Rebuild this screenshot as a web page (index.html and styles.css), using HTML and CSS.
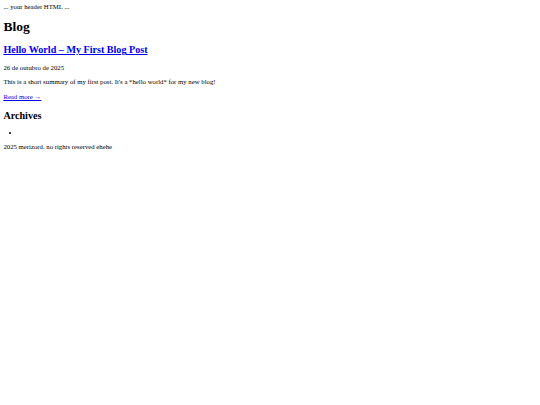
FILE: index.html
```html
<!DOCTYPE html>
<html lang="pt">
<head>
<meta charset="utf-8">
<title>Blog</title>
<link rel="stylesheet" href="styles.css">
</head>
<body>
<div class="site-header">... your header HTML ...</div>
<main class="content">
  <h1 class="page-title">Blog</h1>
  <article class="post">
    <h2 class="post-title"><a href="#">Hello World – My First Blog Post</a></h2>
    <p class="post-date">26 de outubro de 2025</p>
    <p class="post-summary">This is a short summary of my first post. It's a *hello world* for my new blog!</p>
    <p class="post-more"><a class="read-more" href="#">Read more →</a></p>
  </article>
  <section class="archives">
    <h2 class="archives-title">Archives</h2>
    <ul class="archives-list"><li></li></ul>
  </section>
</main>
<footer class="site-footer">2025 merizord. no rights reserved ehehe</footer>
</body>
</html>
```

FILE: styles.css
```css
html {
  background: #fff;
}
body {
  margin: 3.375px;
  font-family: "Liberation Serif", "Times New Roman", serif;
  font-size: 6.75px;
  color: #000;
}
a {
  color: #0000ee;
}
.page-title {
  font-size: 2em;
  margin: 0.67em 0;
}
.post-title {
  font-size: 1.5em;
  margin: 0.83em 0;
}
.post p {
  margin: 1em 0;
}
.post .post-more {
  margin-top: 8.75px;
}
.archives-title {
  font-size: 1.5em;
  margin: 9.4px 0 8.4px;
}
.archives-list {
  margin: 7.75px 0 6.75px;
  padding-left: 16.875px;
}
```
